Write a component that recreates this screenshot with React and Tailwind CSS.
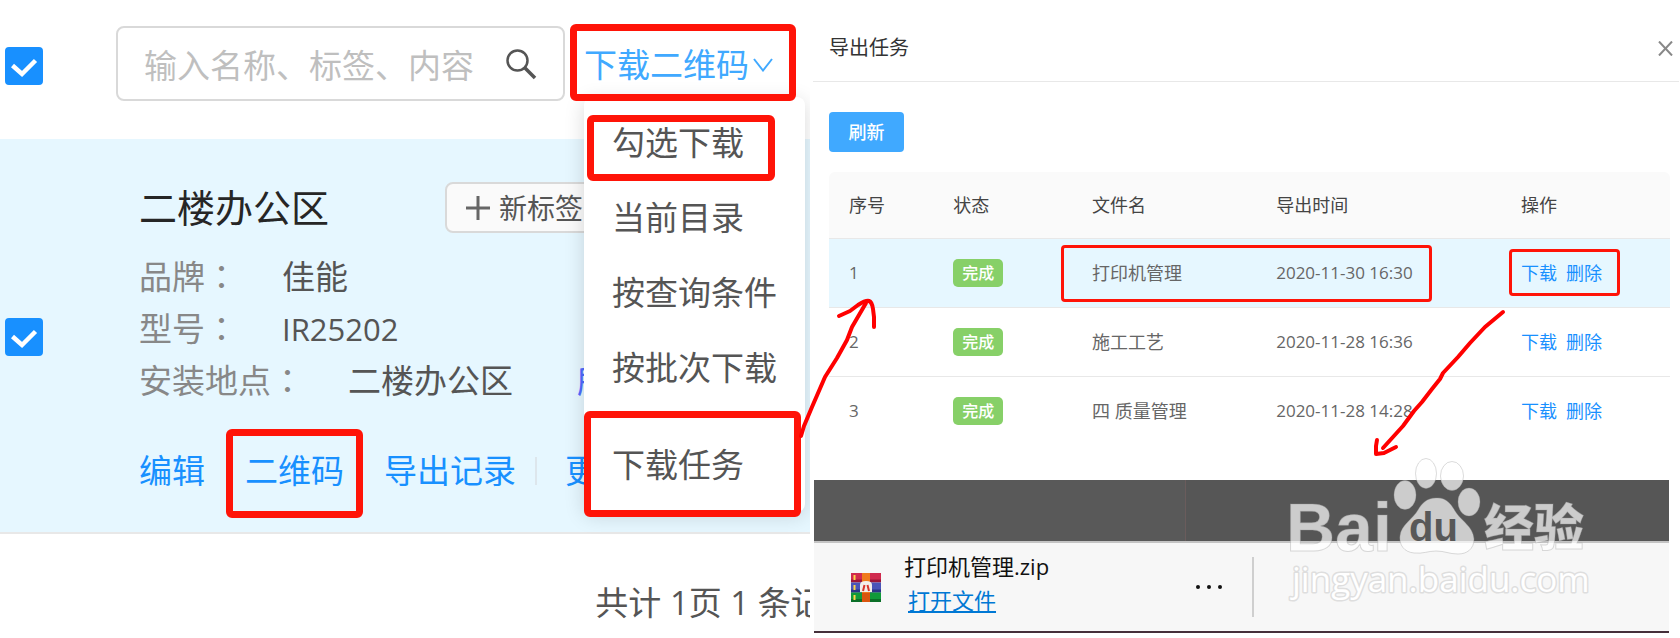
import React, { useState } from 'react';
import clsx from 'clsx';

const menuItems = ['勾选下载', '当前目录', '按查询条件', '按批次下载'];

const details = [
  { label: '品牌', value: '佳能' },
  { label: '型号', value: 'IR25202', latin: true },
  { label: '安装地点', value: '二楼办公区' },
];

const tasks = [
  { id: 1, name: '打印机管理', time: '2020-11-30 16:30' },
  { id: 2, name: '施工工艺', time: '2020-11-28 16:36' },
  { id: 3, name: '四 质量管理', time: '2020-11-28 14:28' },
];

// Red highlight frame drawn over a control
const Mark = ({ className }) => (
  <span
    aria-hidden="true"
    className={clsx('pointer-events-none absolute z-20 border-[#ff1408]', className)}
  />
);

const Checkbox = ({ label }) => {
  const [checked, setChecked] = useState(true);

  return (
    <label className="relative block size-[38px] shrink-0">
      <input
        type="checkbox"
        aria-label={label}
        checked={checked}
        onChange={() => setChecked(!checked)}
        className="block size-[38px] appearance-none rounded-[4px] border-2 border-[#1890ff] bg-white checked:bg-[#1890ff]"
      />
      {checked && (
        <svg viewBox="0 0 38 38" className="pointer-events-none absolute inset-0" fill="none">
          <path d="M7.500 18.500l9.500 8.500L30.500 13.500" stroke="#fff" strokeWidth="4.500" />
        </svg>
      )}
    </label>
  );
};

const DownloadMenu = () => (
  <div className="relative h-[77px] w-[226px] shrink-0">
    <button
      type="button"
      className="flex h-full w-full items-center gap-1 pt-1 pl-[14px] text-[33px] leading-[52px] whitespace-nowrap text-[#40a9ff]"
    >
      下载二维码
      <svg viewBox="0 0 20 14" className="h-[14px] w-[20px] shrink-0" fill="none">
        <path d="M1 1l9 11.500L19 1" stroke="#40a9ff" strokeWidth="2" />
      </svg>
    </button>
    <Mark className="inset-0 rounded-md border-[7px]" />

    <ul className="absolute top-[73px] left-[14px] z-10 w-[221px] rounded-lg bg-white pt-2 pb-[10px] text-[33px] text-[#555] shadow-[0_4px_20px_rgba(0,0,0,0.15)]">
      {menuItems.map((item, index) => (
        <li key={item} className="relative">
          <button type="button" className="block h-[75px] w-full pl-7 text-left whitespace-nowrap">
            {item}
          </button>
          {index === 0 && <Mark className="top-[10px] left-[3px] h-[66px] w-[188px] rounded-md border-[7px]" />}
        </li>
      ))}
      <li className="relative mt-[22px]">
        <button type="button" className="block h-[75px] w-full pl-7 text-left whitespace-nowrap">
          下载任务
        </button>
        <Mark className="-top-4 left-0 h-[106px] w-[217px] rounded-md border-[7px]" />
      </li>
    </ul>
  </div>
);

const DeviceList = () => (
  <section className="overflow-hidden">
    {/* Search bar */}
    <div className="flex h-[139px] items-start pt-6 pr-[14px] pl-[5px]">
      <div className="mt-[23px]">
        <Checkbox label="全选" />
      </div>
      <div className="mt-[2px] mr-[5px] ml-[73px] flex h-[75px] min-w-0 flex-1 items-center rounded-lg border-2 border-[#d9d9d9] pr-[26px] pl-[26px]">
        <input
          type="text"
          aria-label="搜索"
          placeholder="输入名称、标签、内容"
          className="h-full min-w-0 flex-1 pt-1 text-[33px] text-[#555] outline-none placeholder:text-[#bfbfbf]"
        />
        <button type="button" aria-label="查询">
          <svg viewBox="0 0 32 32" className="size-8" fill="none" stroke="#555">
            <circle cx="12.500" cy="12.500" r="10" strokeWidth="2.500" />
            <path d="M19.500 19.500L30 30" strokeWidth="3.500" />
          </svg>
        </button>
      </div>
      <DownloadMenu />
    </div>

    {/* Selected device */}
    <div className="flex items-center border-b-2 border-[#e8e8e8] bg-[#e6f7ff] pt-[43px] pb-[35px] pl-[5px]">
      <div className="pb-[5px]">
        <Checkbox label="二楼办公区" />
      </div>
      <div className="ml-24 whitespace-nowrap">
        <div className="flex items-center">
          <h2 className="text-[38px] leading-[51px] text-[#262626]">二楼办公区</h2>
          <button
            type="button"
            className="ml-[116px] flex h-[51px] items-center gap-2 rounded-lg border-2 border-[#d9d9d9] bg-[#fafafa] px-[18px] text-[28px] text-[#555]"
          >
            <svg viewBox="0 0 26 26" className="size-[26px]" stroke="#666" strokeWidth="3">
              <path d="M13 1v24M1 13h24" />
            </svg>
            新标签
          </button>
        </div>

        <dl className="mt-[18px] text-[33px] leading-[52px]">
          {details.map((item) => (
            <div key={item.label} className="flex h-[52px] gap-11">
              <dt className="text-[#888]">
                {item.label}
                <span className="font-['Noto_Sans_CJK_TC',sans-serif] leading-none" lang="zh-TW">：</span>
              </dt>
              <dd className={clsx('text-[#555]', item.latin && 'text-[31px]')}>{item.value}</dd>
              {item.label === '安装地点' && (
                <a href="#room" className="ml-5 text-[#4f6bff]">所</a>
              )}
            </div>
          ))}
        </dl>

        <div className="mt-[38px] flex items-center text-[33px] leading-[52px] text-[#1890ff]">
          <a href="#edit">编辑</a>
          <span className="relative ml-10">
            <a href="#qrcode">二维码</a>
            <Mark className="-top-4 -left-[19px] h-[89px] w-[137px] rounded-md border-[7px]" />
          </span>
          <a href="#records" className="ml-10">导出记录</a>
          <span className="ml-[19px] h-7 w-[2px] bg-[#dde6ec]" />
          <a href="#more" className="ml-7">更</a>
        </div>
      </div>
    </div>

    <p className="pt-[43px] pl-[73.5%] text-[33px] leading-[52px] whitespace-nowrap text-[#555]">共计 1页 1 条记</p>
  </section>
);

const TaskTable = () => (
  <table className="mt-5 w-full table-fixed text-left text-[18px] leading-7">
    <thead>
      <tr className="h-[66px] border-b border-[#e8e8e8] bg-[#fafafa] text-[#444]">
        <th className="w-[12.4%] rounded-tl-md pl-5 font-normal">序号</th>
        <th className="w-[16.5%] pl-5 font-normal">状态</th>
        <th className="w-[21.9%] pl-5 font-normal">文件名</th>
        <th className="w-[29.1%] pl-5 font-normal">导出时间</th>
        <th className="rounded-tr-md pl-5 font-normal">操作</th>
      </tr>
    </thead>
    <tbody className="text-[#666]">
      {tasks.map((task, index) => (
        <tr
          key={task.id}
          className={clsx('h-[69px] border-b border-[#e8e8e8] last:border-0', index === 0 && 'bg-[#e6f7ff]')}
        >
          <td className="pl-5 text-[17px]">{task.id}</td>
          <td className="pl-5">
            <span className="flex h-7 w-[50px] items-center justify-center rounded-[5px] bg-[#87d068] text-[16px] font-medium text-white">
              完成
            </span>
          </td>
          <td className="relative pl-5">
            {task.name}
            {index === 0 && <Mark className="top-[6px] -left-[11px] h-[57px] w-[371px] rounded-[4px] border-[3px]" />}
          </td>
          <td className="pl-5 text-[17px]">{task.time}</td>
          <td className="relative pl-5 text-[#1890ff]">
            <a href="#download">下载</a>
            <a href="#delete" className="ml-[9px]">删除</a>
            {index === 0 && <Mark className="top-[10px] left-2 h-[47px] w-[111px] rounded-[4px] border-[3px]" />}
          </td>
        </tr>
      ))}
    </tbody>
  </table>
);

const ArchiveIcon = () => (
  <svg viewBox="0 0 30 29" className="h-[29px] w-[30px] shrink-0">
    <rect width="30" height="9" fill="#d02a4e" />
    <rect y="6.500" width="30" height="3" fill="#9c1738" />
    <rect y="9.500" width="30" height="10" fill="#4a55b8" />
    <rect y="16.500" width="30" height="3" fill="#2c3487" />
    <rect y="19.500" width="30" height="9.500" fill="#119a3a" />
    <rect y="26" width="30" height="3" fill="#0b6f28" />
    <path d="M2.500 2h2v5h-2zM2.500 12h2v5h-2zM2.500 22h2v5h-2z" fill="#ffd54a" />
    <rect x="11" width="8" height="29" fill="#f07a1c" />
    <rect x="11" y="20" width="8" height="9" fill="#d9560f" />
    <path d="M9 19V12q0-4 6-4t6 4v7z" fill="#f3efe9" />
    <path d="M12 18l1.500-6M18 18l-1.500-6" stroke="#d7352c" strokeWidth="2" />
  </svg>
);

const DownloadBar = () => (
  <div className="mt-[35px] mr-[11px] ml-1">
    <div className="flex h-[61px] bg-[#565656]">
      <div className="w-[43.5%] border-r border-[#6a5c5c] bg-[#595959]" />
    </div>
    <div className="flex h-[90px] items-center border-t-2 border-[#c4c4c4] bg-[#f7f7f7]">
      <div className="flex w-[438px] items-center pr-[29px] pl-[37px]">
        <ArchiveIcon />
        <div className="ml-[23px] pb-2 text-[22px] leading-[34px] whitespace-nowrap">
          <p className="text-[#111]">打印机管理.zip</p>
          <a href="#open" className="ml-1 block text-[#0078d4] underline">打开文件</a>
        </div>
        <button type="button" aria-label="更多" className="ml-auto">
          <svg viewBox="0 0 28 6" className="h-[6px] w-7" fill="#111">
            <circle cx="3" cy="3" r="2" />
            <circle cx="14" cy="3" r="2" />
            <circle cx="25" cy="3" r="2" />
          </svg>
        </button>
      </div>
      <div className="h-[60px] w-[2px] bg-[#cfcfcf]" />
    </div>
    <div className="h-[2px] bg-[#45303a]" />
  </div>
);

const ExportTasks = () => (
  <section className="min-w-0 pb-[5px]">
    <header className="mr-px ml-[3px] flex items-center justify-between border-b border-[#e8e8e8] pt-[34px] pr-[6px] pb-[19px] pl-4">
      <h1 className="text-[20px] leading-7 text-[#333]">导出任务</h1>
      <button type="button" aria-label="关闭">
        <svg viewBox="0 0 15 15" className="size-[15px]" stroke="#888" strokeWidth="2">
          <path d="M1 0.500l13 14M14 0.500l-13 14" />
        </svg>
      </button>
    </header>
    <div className="pt-[30px] pr-[10px] pl-[19px]">
      <button type="button" className="block h-10 w-[75px] rounded-[4px] bg-[#40a9ff] text-[18px] font-medium text-white">
        刷新
      </button>
      <TaskTable />
    </div>
    <DownloadBar />
  </section>
);

// Hand-drawn arrows linking the highlighted steps
const Arrows = () => (
  <svg
    viewBox="0 0 1680 638"
    className="pointer-events-none absolute top-0 left-0 z-30 w-full"
    fill="none"
    stroke="#ff0000"
    strokeWidth="4"
    strokeLinecap="round"
    strokeLinejoin="round"
  >
    <path d="M801 436l3-10 8-19 13-30 12-19 10-18 5-13 14-24" />
    <path d="M839 316l11-5 8-6q8-5 11-4t4 8l1 8v10" />
    <path d="M1503 312l-18 15-15 16-12 14-15 16-3 6-8 10-10 13-8 9-11 15-20 22" />
    <path d="M1377 440l-1 6v8l8-1 12-6" />
  </svg>
);

const Watermark = () => (
  <svg
    viewBox="0 0 320 160"
    aria-label="Baidu 经验"
    className="pointer-events-none absolute top-[450px] left-[1280px] z-40 h-[160px] w-[320px]"
  >
    <g fill="#fff" fillOpacity="0.7" stroke="#999" strokeOpacity="0.35" strokeWidth="1">
      <text x="6" y="101" fontSize="68" fontWeight="700" fontFamily="Liberation Sans, sans-serif">Bai</text>
      <ellipse cx="125" cy="45" rx="11" ry="14.500" />
      <ellipse cx="146" cy="23.500" rx="10.500" ry="15" />
      <ellipse cx="172" cy="26" rx="11.500" ry="14.500" />
      <ellipse cx="189" cy="52" rx="11" ry="14" />
      <path d="M156 48C166 47 171 54 175 61C181 71 193 76 194 89C194 99 187 104 178 104C169 104 165 101 156 101C148 101 143 104 134 103C124 102 119 95 120 86C121 75 133 69 138 60C142 53 147 48 156 48Z" />
      <text x="204" y="96" fontSize="50" fontWeight="900" fontFamily="Noto Sans CJK SC, sans-serif">经验</text>
    </g>
    <text
      x="12"
      y="142"
      fontSize="35"
      fontFamily="Open Sans, sans-serif"
      fill="#fff"
      stroke="#dedede"
      strokeWidth="3"
      strokeLinejoin="round"
      paintOrder="stroke"
    >
      jingyan.baidu.com
    </text>
    <text x="129" y="91" fontSize="40" fontWeight="700" fill="#585858" fontFamily="Liberation Sans, sans-serif">du</text>
  </svg>
);

const App = () => {
  return (
    <main className="relative grid grid-cols-[27fr_29fr] overflow-hidden bg-white font-['Open_Sans','Noto_Sans_CJK_SC',sans-serif]">
      <DeviceList />
      <ExportTasks />
      <Arrows />
      <Watermark />
    </main>
  );
};

export default App;
